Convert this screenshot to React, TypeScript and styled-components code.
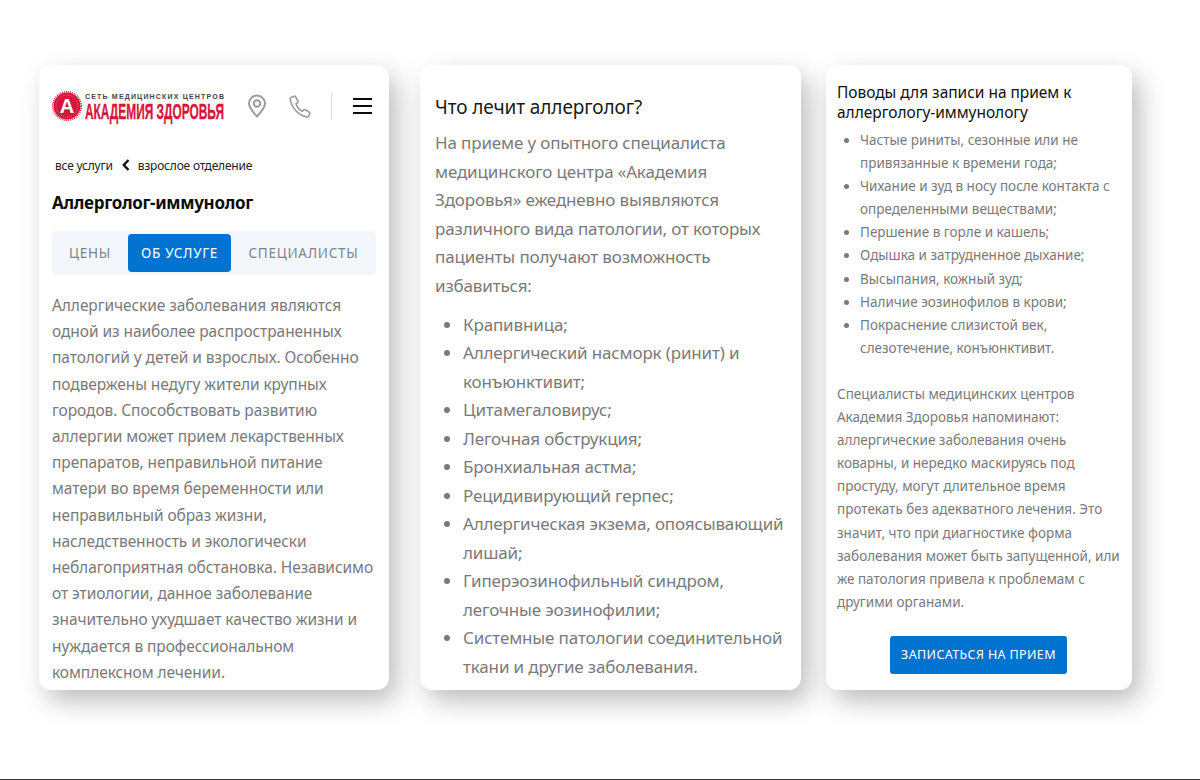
import React from "react";
import styled, { createGlobalStyle } from "styled-components";

const Global = createGlobalStyle`
  html, body { margin: 0; padding: 0; background: #fff; }
  body { font-family: "Noto Sans", "Liberation Sans", sans-serif; }
`;
const Page = styled.div`
  width: 1200px; height: 780px; box-sizing: border-box; overflow: hidden;
  border-bottom: 1px solid #3a3a3a;
  display: flex; padding: 65px 0 0 39px; align-items: flex-start;
`;
const Card = styled.section<{ $w: number; $pl: number; $ml?: number; $pt: number }>`
  width: ${p => p.$w}px; height: 625px; box-sizing: border-box; flex: none;
  margin-left: ${p => p.$ml ?? 0}px;
  padding: ${p => p.$pt}px 0 0 ${p => p.$pl}px;
  background: #fff; border-radius: 12px; overflow: hidden;
  box-shadow: 8px 11px 26px rgba(0,0,0,.26);
`;
const Header = styled.header`display: flex; align-items: center; height: 30px; margin-top: 11px;`;
const LogoMark = styled.svg`flex: none; display: block; overflow: visible;`;
const Icons = styled.div`display: flex; align-items: center; margin-left: 21px;`;
const IconSlot = styled.div<{ $w: number }>`width: ${p => p.$w}px; display: flex; color: #9a9a9a;`;
const Divider = styled.div`width: 1px; height: 27px; background: #ddd; margin-left: 9px;`;
const Burger = styled.div`
  width: 19px; height: 16px; margin-left: 21px; display: flex; flex-direction: column; justify-content: space-between;
  & > i { display: block; height: 2px; background: #0a0a0a; }
`;
const Crumbs = styled.nav`
  display: flex; align-items: center; height: 18px; margin: 35px 0 0 3px;
  font-size: 12px; letter-spacing: -.2px; color: #222;
`;
const Chevron = styled.svg`margin: 0 8px 0 9px; flex: none;`;
const Title = styled.h1`
  margin: 17px 0 0; font: 700 17px/24px "Noto Sans", sans-serif; color: #0d0d0d; letter-spacing: -.3px;
`;
const Tabs = styled.div`
  width: 324px; height: 44px; margin-top: 16px; background: #f3f7fb; border-radius: 4px;
  display: flex; align-items: center; box-sizing: border-box;
`;
const Tab = styled.div<{ $active?: boolean; $w: number }>`
  width: ${p => p.$w}px; height: 38px; display: flex; align-items: center; justify-content: center; flex: none;
  font-size: 13.5px; letter-spacing: .72px; border-radius: 4px; text-transform: uppercase;
  color: ${p => (p.$active ? "#fff" : "#7b858c")};
  background: ${p => (p.$active ? "#0073d1" : "transparent")};
`;
const Para = styled.p<{ $fs: number; $lh: number; $mt: number; $ls: number }>`
  margin: ${p => p.$mt}px 0 0; font-size: ${p => p.$fs}px; line-height: ${p => p.$lh}px; color: #7a7a7a;
  white-space: nowrap; letter-spacing: ${p => p.$ls}px;
`;
const H2 = styled.h2`margin: 0; font-weight: 400; font-size: 19px; line-height: 28px; color: #1a1a1a; letter-spacing: -.1px;`;
const H3 = styled.h3`margin: 0; font-weight: 400; font-size: 15.5px; line-height: 20px; color: #111; white-space: nowrap; letter-spacing: -.03px;`;
const List = styled.ul<{ $fs: number; $lh: number; $pl: number; $mt: number; $ls: number }>`
  margin: ${p => p.$mt}px 0 0; padding: 0 0 0 ${p => p.$pl}px; font-size: ${p => p.$fs}px; line-height: ${p => p.$lh}px;
  color: #7a7a7a; white-space: nowrap; letter-spacing: ${p => p.$ls}px;
`;
const CTA = styled.button`
  display: block; width: 177px; height: 38px; margin: 22px 0 0 53px; border: 0; border-radius: 3px; background: #0073d1;
  color: #fff; font: 400 12.5px "Noto Sans", sans-serif; letter-spacing: .38px; text-transform: uppercase; padding: 0; white-space: nowrap;
`;

const lines = (arr: string[]) => arr.map((l, i) => (
  <React.Fragment key={i}>{l}{i < arr.length - 1 && <br />}</React.Fragment>
));

const intro = ["Аллергические заболевания являются","одной из наиболее распространенных","патологий у детей и взрослых. Особенно","подвержены недугу жители крупных","городов. Способствовать развитию","аллергии может прием лекарственных","препаратов, неправильной питание","матери во время беременности или","неправильный образ жизни,","наследственность и экологически","неблагоприятная обстановка. Независимо","от этиологии, данное заболевание","значительно ухудшает качество жизни и","нуждается в профессиональном","комплексном лечении."];
const treat = ["На приеме у опытного специалиста","медицинского центра «Академия","Здоровья» ежедневно выявляются","различного вида патологии, от которых","пациенты получают возможность","избавиться:"];
const diseases = [["Крапивница;"],["Аллергический насморк (ринит) и","конъюнктивит;"],["Цитамегаловирус;"],["Легочная обструкция;"],["Бронхиальная астма;"],["Рецидивирующий герпес;"],["Аллергическая экзема, опоясывающий","лишай;"],["Гиперэозинофильный синдром,","легочные эозинофилии;"],["Системные патологии соединительной","ткани и другие заболевания."]];
const reasons = [["Частые риниты, сезонные или не","привязанные к времени года;"],["Чихание и зуд в носу после контакта с","определенными веществами;"],["Першение в горле и кашель;"],["Одышка и затрудненное дыхание;"],["Высыпания, кожный зуд;"],["Наличие эозинофилов в крови;"],["Покраснение слизистой век,","слезотечение, конъюнктивит."]];
const note = ["Специалисты медицинских центров","Академия Здоровья напоминают:","аллергические заболевания очень","коварны, и нередко маскируясь под","простуду, могут длительное время","протекать без адекватного лечения. Это","значит, что при диагностике форма","заболевания может быть запущенной, или","же патология привела к проблемам с","другими органами."];

export default function App() {
  return (
    <Page>
      <Global />
      <Card $w={350} $pl={13} $pt={15}>
        <Header>
          <LogoMark width="173" height="30" viewBox="0 0 173 30">
            <circle cx="15" cy="15" r="13.500" fill="#d3173a" />
            <circle cx="15" cy="15" r="14.300" fill="none" stroke="#d3173a" strokeWidth="1.400" strokeDasharray="1 1" />
            <circle cx="15" cy="15" r="11" fill="none" stroke="#ef9aa9" strokeWidth=".6" strokeDasharray="1 1" />
            <text x="15" y="22" textAnchor="middle" fontFamily="Liberation Sans" fontWeight="700" fontSize="20" fill="#fff">А</text>
            <text x="33" y="8" fontFamily="Liberation Sans" fontWeight="700" fontSize="7" fill="#444" textLength="139" lengthAdjust="spacing">СЕТЬ МЕДИЦИНСКИХ ЦЕНТРОВ</text>
            <text x="33" y="27.800" fontFamily="Liberation Sans" fontWeight="700" fontSize="22" fill="#d3173a" stroke="#d3173a" strokeWidth=".35" textLength="139" lengthAdjust="spacingAndGlyphs">АКАДЕМИЯ ЗДОРОВЬЯ</text>
          </LogoMark>
          <Icons>
            <IconSlot $w={42}>
              <svg width="22" height="24" viewBox="0 0 22 24" fill="none" stroke="currentColor" strokeWidth="2">
                <path d="M11 22.5C6 17 3 13.5 3 9.5a8 8 0 0 1 16 0c0 4-3 7.500-8 13z" strokeLinejoin="round" />
                <circle cx="11" cy="9.500" r="3.200" />
              </svg>
            </IconSlot>
            <IconSlot $w={34}>
              <svg width="24" height="24" viewBox="0 0 24 24" fill="none" stroke="currentColor" strokeWidth="1.600" strokeLinejoin="round" strokeLinecap="round">
                <path d="M3 3.500l3.200-1.300c.6-.2 1 0 1.300.5l2.400 4.300c.3.500.2 1-.2 1.400L8 9.800c1 3 3.300 6 6.200 7.600l1.800-1.500c.5-.4 1-.4 1.500-.1l4 2.700c.5.300.6.800.4 1.300l-1.300 2.300c-.4.700-1.200 1-2 .8C10 21 3.500 13.500 2.200 5c-.1-.7.200-1.300.8-1.500z" />
              </svg>
            </IconSlot>
            <Divider />
            <Burger><i /><i /><i /></Burger>
          </Icons>
        </Header>
        <Crumbs>
          все услуги
          <Chevron width="8" height="12" viewBox="0 0 8 12" fill="none" stroke="#111" strokeWidth="2.400"><path d="M6.500 1L1.800 6l4.700 5" /></Chevron>
          взрослое отделение
        </Crumbs>
        <Title>Аллерголог-иммунолог</Title>
        <Tabs>
          <Tab $w={76}>Цены</Tab>
          <Tab $w={103} $active>Об услуге</Tab>
          <Tab $w={145}>Специалисты</Tab>
        </Tabs>
        <Para $fs={15.500} $lh={26.200} $mt={17} $ls={-0.07}>{lines(intro)}</Para>
      </Card>
      <Card $w={381} $pl={15} $ml={31} $pt={28}>
        <H2>Что лечит аллерголог?</H2>
        <Para $fs={17} $lh={28.600} $mt={8} $ls={-0.15}>{lines(treat)}</Para>
        <List $fs={17} $lh={28.500} $pl={28} $mt={10} $ls={-0.15}>
          {diseases.map((d, i) => <li key={i}>{lines(d)}</li>)}
        </List>
      </Card>
      <Card $w={306} $pl={11} $ml={25} $pt={17}>
        <H3>Поводы для записи на прием к<br />аллергологу-иммунологу</H3>
        <List $fs={13.500} $lh={23.100} $pl={23} $mt={7} $ls={0}>
          {reasons.map((d, i) => <li key={i}>{lines(d)}</li>)}
        </List>
        <Para $fs={13.500} $lh={23.100} $mt={23} $ls={0}>{lines(note)}</Para>
        <CTA>Записаться на прием</CTA>
      </Card>
    </Page>
  );
}
